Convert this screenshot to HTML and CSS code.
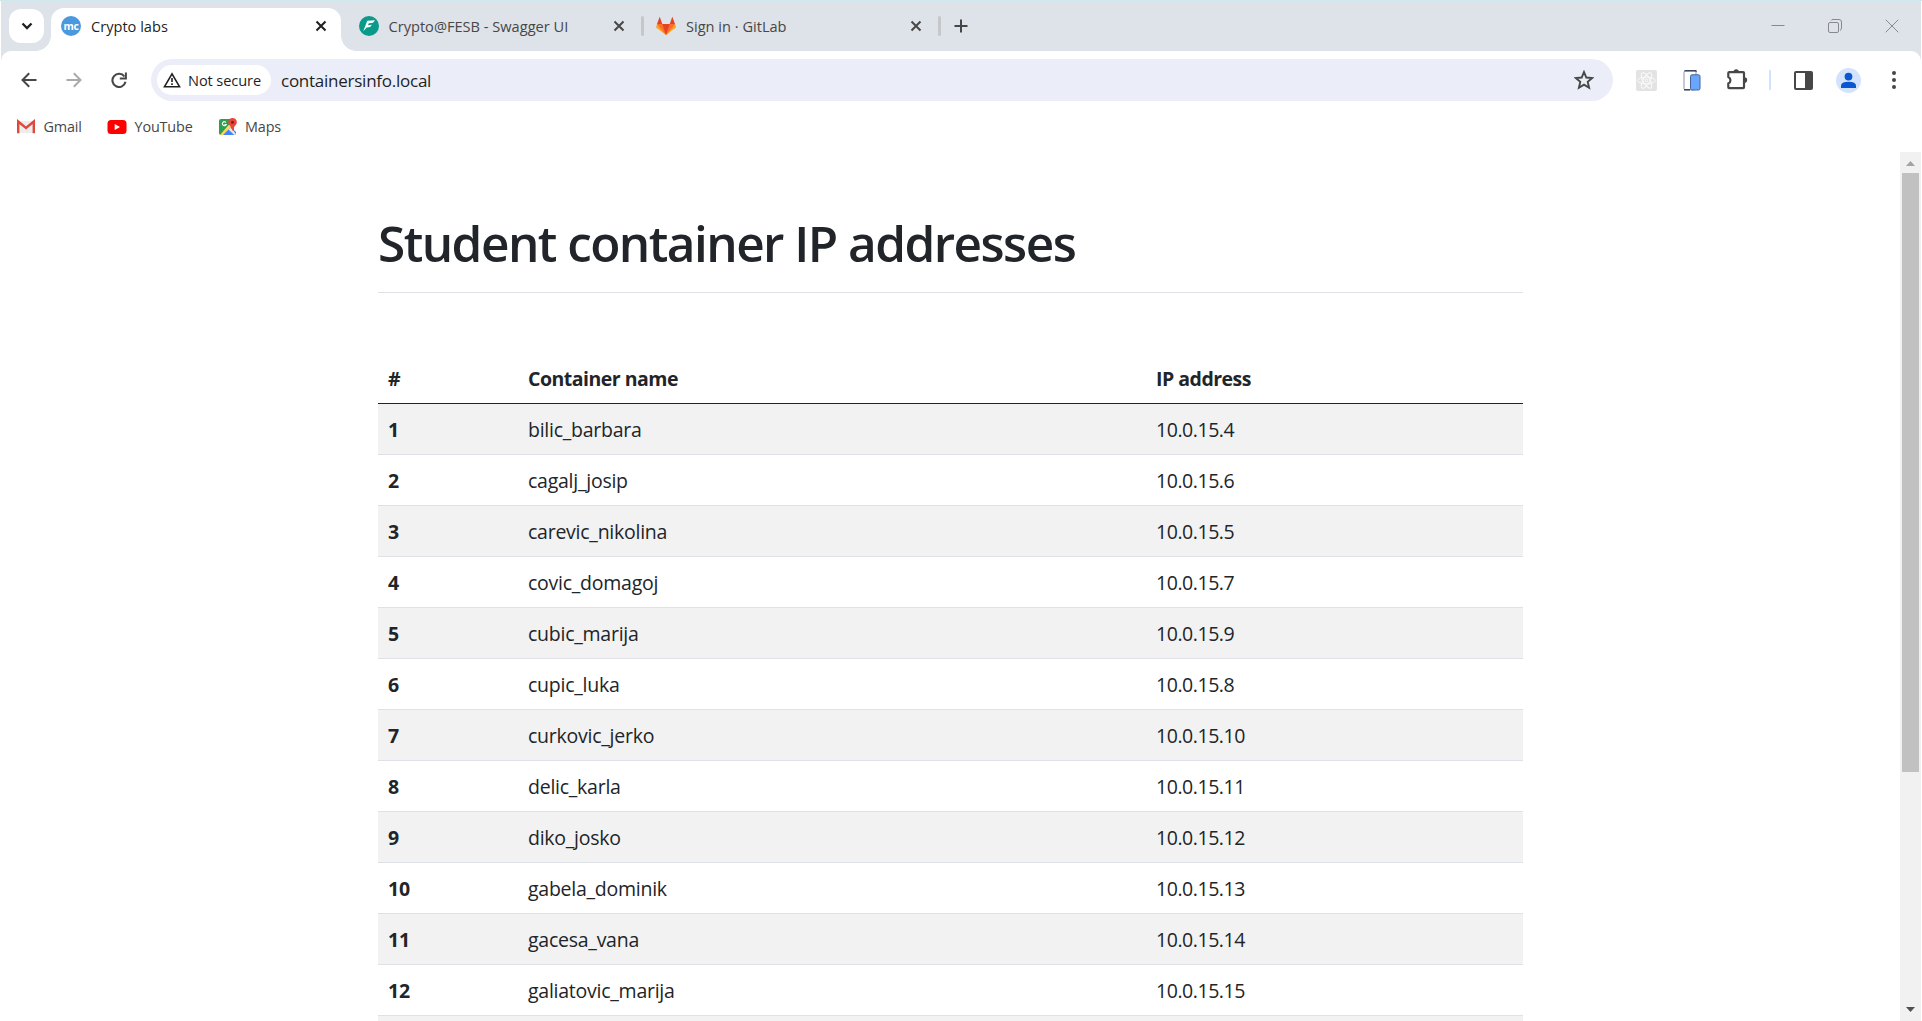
FILE: index.html
```html
<!DOCTYPE html>
<html lang="en">
<head>
<meta charset="utf-8">
<title>Crypto labs</title>
<link rel="stylesheet" href="styles.css">
</head>
<body>
<div class="window">
  <header class="strip">
    <button class="tab-search" aria-label="Search tabs"><svg width="12" height="8" viewBox="0 0 12 8"><path d="M1.500 1.500 6 6l4.500-4.500" fill="none" stroke="#1f1f1f" stroke-width="2.300"/></svg></button>
    <div class="tabs">
      <div class="tab tab-active">
        <svg class="favicon" viewBox="0 0 20 20"><circle cx="10" cy="10" r="10" fill="#4a98de"/><text class="favicon-text" x="10" y="14" text-anchor="middle">mc</text></svg>
        <span class="tab-title">Crypto labs</span>
        <svg class="tab-close" viewBox="0 0 20 20"><path d="m5.500 5.500 9 9m0-9-9 9"/></svg>
      </div>
      <div class="tab tab-divided">
        <svg class="favicon" viewBox="0 0 20 20"><circle cx="10" cy="10" r="10" fill="#0a9a89"/><path d="M8.300 4.800 16 4.200l-2 2.600-4.200.5-.9 1.900 4-.5-1.700 2.400-3.500.5L4.200 15.300z" fill="#fff"/></svg>
        <span class="tab-title">Crypto@FESB - Swagger UI</span>
        <svg class="tab-close" viewBox="0 0 20 20"><path d="m5.500 5.500 9 9m0-9-9 9"/></svg>
      </div>
      <div class="tab tab-divided">
        <svg class="favicon" viewBox="0 0 20 20"><path d="M10 19 0 11.500 1 8h18l1 3.500z" fill="#fca326"/><path d="M10 19 1 8h18z" fill="#fc6d26"/><path d="M10 19 6.300 8h7.400zM1 8 3.700.8 6.300 8zM19 8 16.300.8 13.700 8z" fill="#e24329"/></svg>
        <span class="tab-title">Sign in · GitLab</span>
        <svg class="tab-close" viewBox="0 0 20 20"><path d="m5.500 5.500 9 9m0-9-9 9"/></svg>
      </div>
    </div>
    <button class="new-tab" aria-label="New tab"><svg width="14" height="14" viewBox="0 0 14 14"><path d="M7 .5v13M.5 7h13" stroke="#444746" stroke-width="2"/></svg></button>
    <div class="window-controls">
      <svg viewBox="0 0 14 14"><path d="M.5 6.500h13"/></svg>
      <svg viewBox="0 0 14 14"><rect x=".5" y="3.500" width="10" height="10" rx="1.500"/><path d="M3 1.500Q3.500.5 5 .5h6Q13.500.5 13.500 3v6q0 1.800-1.500 2.500"/></svg>
      <svg viewBox="0 0 14 14"><path d="m.7.7 12.600 12.600m0-12.600L.7 13.300"/></svg>
    </div>
  </header>

  <nav class="toolbar">
    <span class="slot"><svg width="16" height="16" viewBox="0 0 16 16"><path d="M15.500 8H2M8.200 1.200 1.500 8l6.700 6.800" fill="none" stroke="#474747" stroke-width="2"/></svg></span>
    <span class="slot"><svg width="16" height="16" viewBox="0 0 16 16"><path d="M.5 8H14M7.800 1.200 14.500 8l-6.700 6.800" fill="none" stroke="#aaa" stroke-width="2"/></svg></span>
    <span class="slot"><svg width="16" height="16" viewBox="0 0 16 16"><path d="M13.400 4.500A6.600 6.600 0 1 0 14.500 9.800" fill="none" stroke="#474747" stroke-width="2.100"/><path d="M14.900.4v6.200H8.800" fill="none" stroke="#474747" stroke-width="2"/></svg></span>
    <div class="omnibox">
      <span class="chip"><svg width="18" height="16" viewBox="0 0 18 16"><path d="M9 1.800 1.500 14.700h15z" fill="none" stroke="#1f1f1f" stroke-width="1.600"/><path d="M9 6v4M9 11.300v1.700" stroke="#1f1f1f" stroke-width="1.600"/></svg>Not secure</span>
      <span class="url">containersinfo.local</span>
      <svg class="star" width="20" height="20" viewBox="0 0 20 20"><path d="m10 2 2.300 5.500 5.900.5-4.500 3.900 1.400 5.800-5.100-3.100-5.100 3.100 1.400-5.800L1.800 8l5.900-.5z" fill="none" stroke="#474747" stroke-width="1.900"/></svg>
    </div>
    <div class="actions">
      <span class="slot"><svg width="21" height="21" viewBox="0 0 21 21"><rect width="21" height="21" rx="2" fill="#e3e3e3"/><g fill="none" stroke="#fafafa"><ellipse cx="10.500" cy="10.500" rx="8.800" ry="3.400"/><ellipse cx="10.500" cy="10.500" rx="8.800" ry="3.400" transform="rotate(60 10.500 10.500)"/><ellipse cx="10.500" cy="10.500" rx="8.800" ry="3.400" transform="rotate(120 10.500 10.500)"/><circle cx="10.500" cy="10.500" r="1.300"/></g></svg></span>
      <span class="slot"><svg width="18" height="21" viewBox="0 0 18 21"><rect x="1" y=".8" width="12" height="19" rx="1.500" fill="#fff" stroke="#8d93a5"/><path d="M1.500.8h11q.8 0 .8 1M1 19.800h6" fill="none" stroke="#3d4660" stroke-width="1.500"/><rect x="7.500" y="4.800" width="9.500" height="15.200" rx="1.500" fill="#68a7fb" stroke="#47649a"/></svg></span>
      <span class="slot"><svg width="22" height="22" viewBox="0 0 22 22"><path d="M3.200 3.200h13.900q.9 0 .9.900v14.200q0 .9-.9.900H3.200q-.9 0-.9-.9v-3.800a3.600 3.600 0 0 0 0-6.600V4.100q0-.9.900-.9z" fill="none" stroke="#474747" stroke-width="2.200"/><path d="M7.500 3a2.700 2.700 0 0 1 5.400 0zM18.400 8.300a2.800 2.800 0 0 1 0 5.600z" fill="#474747"/></svg></span>
      <i class="divider"></i>
      <span class="slot"><svg width="19" height="19" viewBox="0 0 19 19"><rect x="1" y="1" width="17" height="17" rx="1" fill="#fff" stroke="#474747" stroke-width="2"/><path d="M11 1h7v17h-7z" fill="#474747"/></svg></span>
      <span class="slot"><svg width="25" height="25" viewBox="0 0 25 25"><circle cx="12.500" cy="12.500" r="12.500" fill="#d3e3fd"/><circle cx="12.500" cy="8.600" r="3.900" fill="#0b57d0"/><path d="M5 20v-2.300q0-4 7.500-4t7.500 4V20z" fill="#0b57d0"/></svg></span>
      <span class="slot"><svg width="4" height="18" viewBox="0 0 4 18"><g fill="#474747"><circle cx="2" cy="2" r="2"/><circle cx="2" cy="9" r="2"/><circle cx="2" cy="16" r="2"/></g></svg></span>
    </div>
  </nav>

  <nav class="bookmarks">
    <a class="bookmark gmail"><svg width="20" height="15" viewBox="0 0 20 15"><path d="M2 2h16v12H2z" fill="#ededed"/><path d="M2.200 14.200V2.500L10 9l7.800-6.500v11.700" fill="none" stroke="#dc4a3e" stroke-width="2.400"/></svg>Gmail</a>
    <a class="bookmark youtube"><svg width="20" height="14" viewBox="0 0 20 14"><rect width="19" height="14" rx="3.500" x=".5" fill="#f00"/><path d="m7.700 4 5.300 3-5.300 3z" fill="#fff"/></svg>YouTube</a>
    <a class="bookmark"><svg width="20" height="20" viewBox="0 0 20 20"><path d="M3 2h13v16H3Q1 18 1 16V4q0-2 2-2z" fill="#2da04f"/><path d="M3 18 12 9l6 6v1q0 2-2 2z" fill="#4285f4"/><path d="m2 18 12.500-14.500L17 6 4.500 18.500z" fill="#fdd663"/><path d="m10.500 12.500 2-2 5 6-1 1.800z" fill="#e4e6e9"/><path d="M8 5.500A2 2 0 1 0 8.200 7.500H6.500" fill="none" stroke="#fff" stroke-width="1.100"/><path d="M14.500 14q-.4-3-2.500-5.300a4.300 4.300 0 1 1 5 0Q14.900 11 14.500 14z" fill="#e8453c"/><circle cx="14.500" cy="5.200" r="1.500" fill="#7b231e"/></svg>Maps</a>
  </nav>

  <div class="viewport">
    <main class="page">
      <h1 class="title">Student container IP addresses</h1>
      <table class="containers">
        <colgroup><col class="col-index"><col class="col-name"><col></colgroup>
        <thead><tr><th>#</th><th>Container name</th><th>IP address</th></tr></thead>
        <tbody>
          <tr><th>1</th><td>bilic_barbara</td><td>10.0.15.4</td></tr>
          <tr><th>2</th><td>cagalj_josip</td><td>10.0.15.6</td></tr>
          <tr><th>3</th><td>carevic_nikolina</td><td>10.0.15.5</td></tr>
          <tr><th>4</th><td>covic_domagoj</td><td>10.0.15.7</td></tr>
          <tr><th>5</th><td>cubic_marija</td><td>10.0.15.9</td></tr>
          <tr><th>6</th><td>cupic_luka</td><td>10.0.15.8</td></tr>
          <tr><th>7</th><td>curkovic_jerko</td><td>10.0.15.10</td></tr>
          <tr><th>8</th><td>delic_karla</td><td>10.0.15.11</td></tr>
          <tr><th>9</th><td>diko_josko</td><td>10.0.15.12</td></tr>
          <tr><th>10</th><td>gabela_dominik</td><td>10.0.15.13</td></tr>
          <tr><th>11</th><td>gacesa_vana</td><td>10.0.15.14</td></tr>
          <tr><th>12</th><td>galiatovic_marija</td><td>10.0.15.15</td></tr>
          <tr><th></th><td></td><td></td></tr>
        </tbody>
      </table>
    </main>
    <div class="scrollbar">
      <svg class="arrow" viewBox="0 0 9 5"><path d="M0 5 4.500 0 9 5z" fill="#a3a3a3"/></svg>
      <div class="thumb"></div>
      <svg class="arrow arrow-down" viewBox="0 0 9 5"><path d="M0 0h9L4.500 5z" fill="#505050"/></svg>
    </div>
  </div>
</div>
</body>
</html>
```
FILE: styles.css
```css
* { box-sizing: border-box; }

body {
  margin: 0;
  overflow: hidden;
  background: #fff;
  color: #212529;
  font-family: "Open Sans", "Noto Sans", sans-serif;
  font-weight: 370;
}

svg { display: block; flex: none; }

button { padding: 0; border: 0; background: none; }

.window {
  display: flex;
  flex-direction: column;
  height: 1021px;
  border-top: 1px solid #cfe8ee;
}

/* Tab strip */
.strip {
  display: flex;
  align-items: flex-start;
  height: 50px;
  margin: 0 1px;
  background: #dee2e9;
}

.tab-search {
  display: flex;
  align-items: center;
  justify-content: center;
  width: 35px;
  height: 34px;
  margin: 8px 7px 0 8px;
  border-radius: 12px;
  background: #fff;
}

.tabs { display: flex; padding-top: 7px; }

.tab {
  position: relative;
  display: flex;
  align-items: center;
  width: 297.5px;
  height: 43px;
  padding: 0 17.5px 7px 10px;
  color: #474747;
  font-size: 14.6px;
  line-height: 20px;
}

.tab-active {
  width: 290px;
  margin-right: 7.5px;
  padding-right: 10px;
  border-radius: 13px 13px 0 0;
  background: #fff;
  color: #1f1f1f;
}

.tab-active::before,
.tab-active::after {
  content: "";
  position: absolute;
  bottom: 0;
  width: 15px;
  height: 15px;
}

.tab-active::before {
  right: 100%;
  background: radial-gradient(circle at 0 0, transparent 14.5px, #fff 15px);
}

.tab-active::after {
  left: 100%;
  background: radial-gradient(circle at 100% 0, transparent 14.5px, #fff 15px);
}

.tab-divided::after {
  content: "";
  position: absolute;
  top: 8px;
  right: 2.5px;
  width: 3px;
  height: 20px;
  border-radius: 1.5px;
  background: #c6c7c9;
}

.favicon { width: 20px; height: 20px; }

.favicon-text {
  fill: #fff;
  font-size: 10.5px;
  font-weight: 700;
  letter-spacing: -.3px;
}

.tab-title { flex: 1; margin-left: 10px; white-space: nowrap; }

.tab-close {
  width: 20px;
  height: 20px;
  fill: none;
  stroke: currentColor;
  stroke-width: 2;
}

.new-tab { margin: 18px 0 0 10px; }

.window-controls { display: flex; margin: 0 1px 0 auto; }

.window-controls svg {
  width: 14px;
  height: 14px;
  margin: 18px 21.5px 0;
  fill: none;
  stroke: #868a8f;
}

/* Toolbar */
.toolbar {
  position: relative;
  z-index: 0;
  display: flex;
  align-items: center;
  height: 58px;
  margin: 0 1px;
  padding-left: 5px;
  background: linear-gradient(#dee2e9, #dee2e9) top / 100% 12px no-repeat;
}

.toolbar::before {
  content: "";
  position: absolute;
  inset: 0;
  z-index: -1;
  border-radius: 10px 10px 0 0;
  background: #fff;
}

.slot {
  display: flex;
  align-items: center;
  justify-content: center;
  flex: none;
  width: 45px;
  height: 42px;
}

.omnibox {
  display: flex;
  align-items: center;
  flex: none;
  width: 1462px;
  height: 42px;
  margin-left: 10px;
  padding: 0 19px 0 6px;
  border-radius: 21px;
  background: #ebeef8;
}

.chip {
  display: flex;
  align-items: center;
  gap: 7px;
  width: 114px;
  height: 30px;
  padding: 0 0 1px 6px;
  border-radius: 15px;
  background: #fff;
  color: #1f1f1f;
  font-size: 14.6px;
  font-weight: 500;
  letter-spacing: -.1px;
  white-space: nowrap;
}

.url {
  flex: 1;
  margin-left: 10px;
  color: #1f1f1f;
  font-size: 17px;
  letter-spacing: -.25px;
}

.actions { display: flex; align-items: center; margin-left: 11px; }

.divider {
  width: 2px;
  height: 20px;
  margin: 0 10px;
  background: #d3e3fd;
}

/* Bookmarks bar */
.bookmarks {
  display: flex;
  height: 43px;
  padding: 0 0 8px 16px;
}

.bookmark {
  display: flex;
  align-items: center;
  gap: 7.5px;
  color: #474747;
  font-size: 14.4px;
  letter-spacing: -.15px;
}

.gmail { width: 91px; }
.youtube { width: 110.5px; }

/* Page */
.viewport { display: flex; flex: 1; min-height: 0; overflow: hidden; }

.page { flex: 1; padding: 60px 377px 0 378px; }

.title {
  height: 81px;
  margin: 0 0 60px;
  padding-top: 1px;
  border-bottom: 1px solid #dee2e6;
  font-size: 49.5px;
  font-weight: 550;
  letter-spacing: -1.54px;
  line-height: 61px;
  white-space: nowrap;
}

.containers {
  width: 1145px;
  table-layout: fixed;
  border-spacing: 0;
  font-size: 19.5px;
  letter-spacing: -.25px;
  line-height: 30px;
}

.col-index { width: 140px; }
.col-name { width: 628px; }

.containers th,
.containers td {
  height: 51px;
  padding: 11px 10px 9px;
  border-bottom: 1px solid #dee2e6;
  text-align: left;
}

.containers td:last-child { letter-spacing: -.45px; }

.containers thead th { border-color: #212529; letter-spacing: -.5px; }

.containers tbody tr:nth-child(odd) { background: #f2f2f2; }

/* Scrollbar */
.scrollbar {
  display: flex;
  flex-direction: column;
  align-items: center;
  width: 21px;
  margin-right: 1px;
  background: #f1f1f1;
}

.arrow { width: 9px; height: 5px; margin: 9px 0 7px; }

.thumb { width: 17px; height: 599px; background: #c1c1c1; }

.arrow-down { margin: auto 0 9px; }
```
